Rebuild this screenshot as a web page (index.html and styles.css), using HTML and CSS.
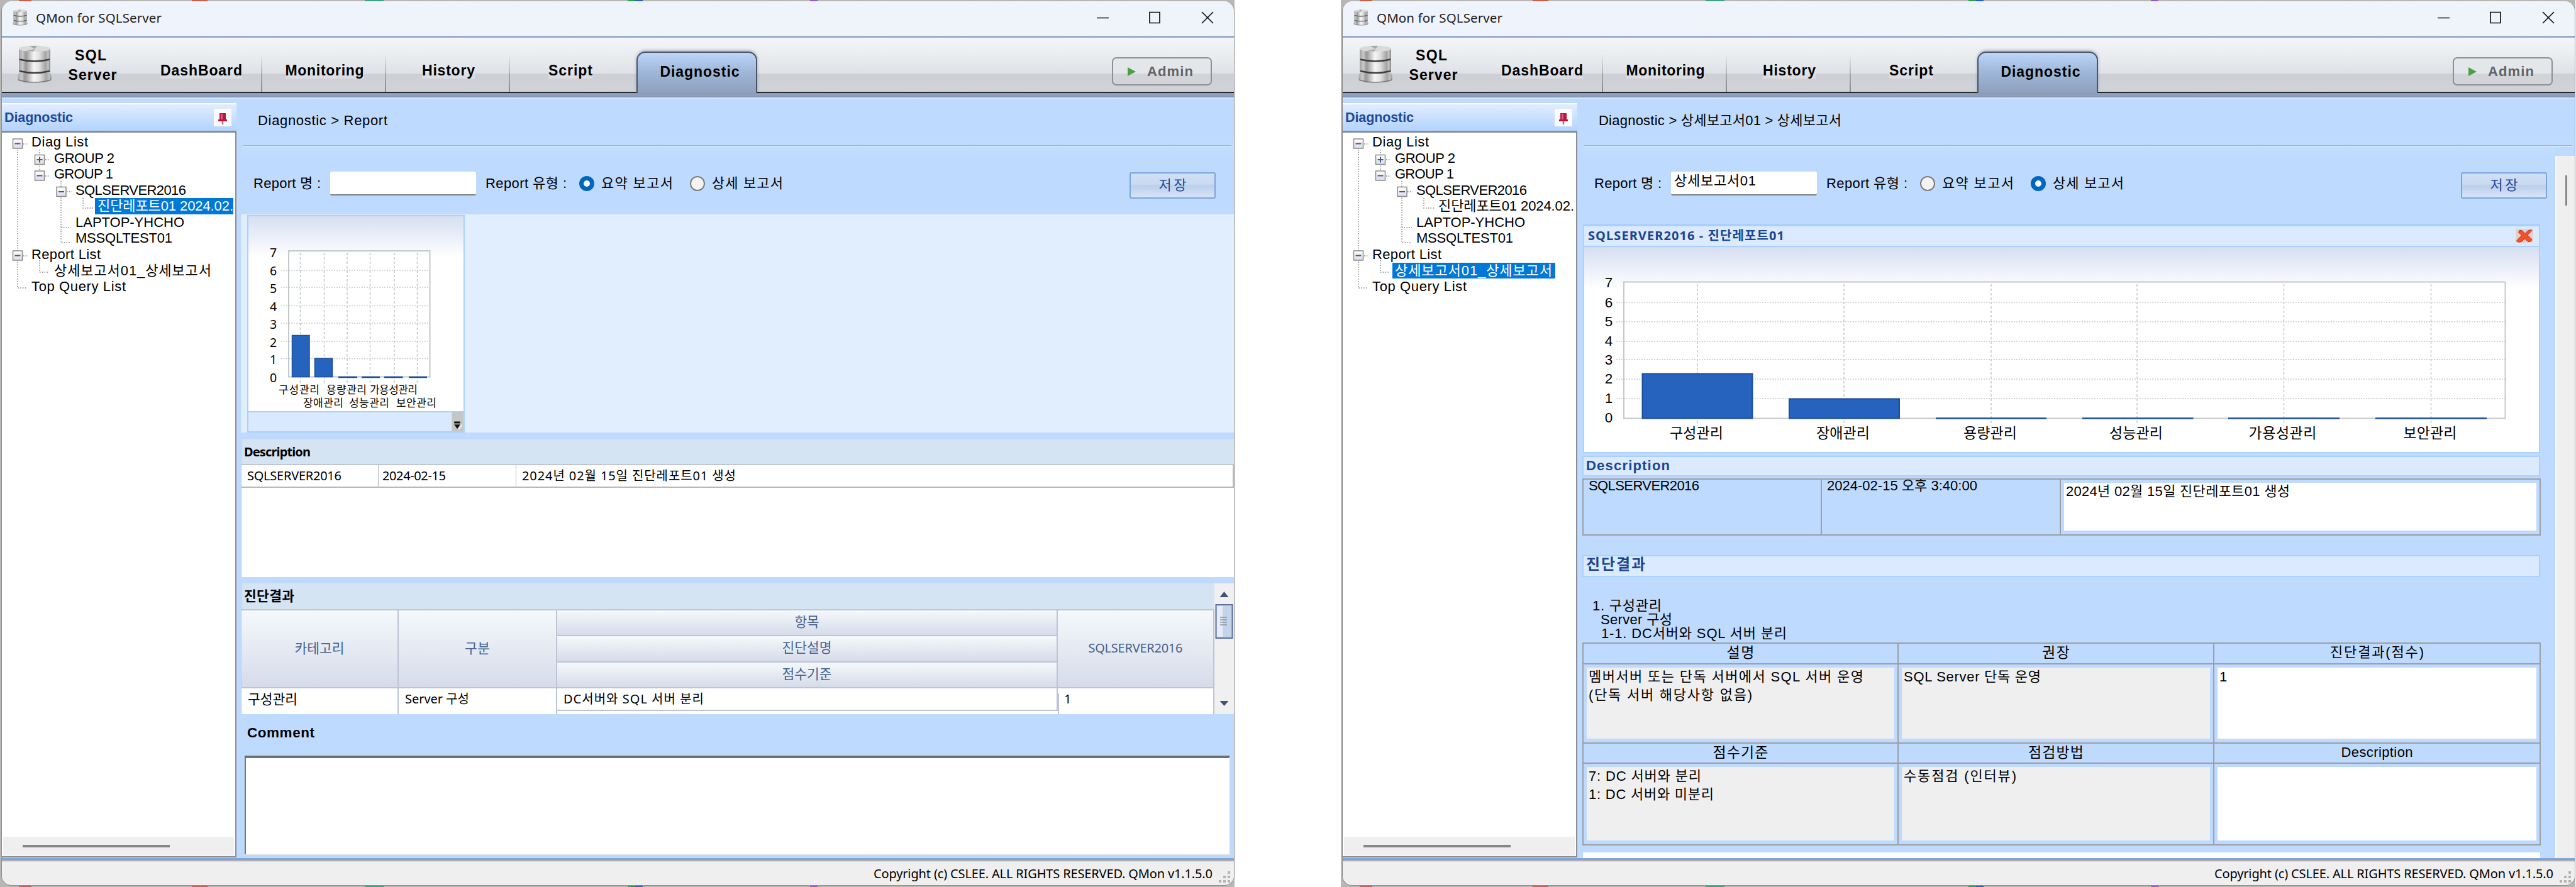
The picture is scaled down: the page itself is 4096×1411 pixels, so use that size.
FILE: index.html
```html
<!DOCTYPE html>
<html lang="ko">
<head>
<meta charset="utf-8">
<title>QMon for SQLServer</title>
<link rel="stylesheet" href="styles.css">
</head>
<body>
<svg class="defs" width="0" height="0">
  <defs>
    <linearGradient id="steel" x1="0" x2="1" y1="0" y2="0">
      <stop offset="0" stop-color="#a2a2a2"/><stop offset=".12" stop-color="#c9c9c9"/><stop offset=".22" stop-color="#979797"/>
      <stop offset=".48" stop-color="#f6f6f6"/><stop offset=".66" stop-color="#dedede"/><stop offset=".85" stop-color="#a4a4a4"/><stop offset=".93" stop-color="#c4c4c4"/><stop offset="1" stop-color="#858585"/>
    </linearGradient>
    <linearGradient id="sky" x1="0" x2="0" y1="0" y2="1">
      <stop offset="0" stop-color="#d6def1"/><stop offset="1" stop-color="#ffffff"/>
    </linearGradient>
    <linearGradient id="node" x1="0" x2="0" y1="0" y2="1">
      <stop offset="0" stop-color="#ffffff"/><stop offset="1" stop-color="#dcdcdc"/>
    </linearGradient>
  </defs>
  <symbol id="db" viewBox="0 0 56 61">
    <path d="M3 44h50l2 9q0 7-27 7t-27-7z" fill="url(#steel)"/>
    <path d="M3 22h50v19q0 5-25 5t-25-5z" fill="url(#steel)"/>
    <path d="M3 5h50v17q0 4-25 4t-25-4z" fill="url(#steel)"/>
    <ellipse cx="28" cy="5.500" rx="25" ry="5" fill="#dadada"/>
    <path d="M28 6L20 1h12zM28 6L12 9.500h14z" fill="#a8a8a8"/>
    <path d="M4 22.500q24 6 48 0M4 41q24 6 48 0" fill="none" stroke="#3d3d3d" stroke-width="2.500"/>
    <path d="M2 55q26 8 52 0" fill="none" stroke="#777" stroke-width="1.500"/>
  </symbol>
  <symbol id="tree-lines" viewBox="0 0 366 260">
    <g fill="none" stroke="#7d7d7d" stroke-width="1.500" stroke-dasharray="1.500 2.300">
      <path d="M23 25V245H38M32 16h8M32 194h8M58 25V67M67 41h8M67 67h8M58 201V220H73M92 75V173H108M92 149h16M101 92h8M127 102V118H144"/>
    </g>
    <g fill="url(#node)" stroke="#8a8a8a" stroke-width="1.500">
      <rect x="15.500" y="8" width="15" height="15"/><rect x="50.500" y="33.500" width="15" height="15"/><rect x="50.500" y="59" width="15" height="15"/>
      <rect x="85" y="84.500" width="15" height="15"/><rect x="15.500" y="186" width="15" height="15"/>
    </g>
    <path d="M18.500 15.500h9M53.500 41h9M58 36.500v9M53.500 66.500h9M88 92h9M18.500 193.500h9" stroke="#3a5aa8" stroke-width="2"/>
  </symbol>
  <symbol id="pin" viewBox="0 0 28 28">
    <rect width="28" height="28" fill="#fbfbfb"/>
    <path d="M9 7h10v10h2v3H7v-3h2z" fill="#b81541"/><path d="M11 8h3v9h-3z" fill="#e2557c"/><path d="M14 20v5" stroke="#b07088" stroke-width="2.500"/>
  </symbol>
  <symbol id="controls" viewBox="0 0 186 20">
    <path d="M0 10.500h19M84 1.500h16v17h-16zM167 1l18 18M185 1l-18 18" fill="none" stroke="#111" stroke-width="1.700"/>
  </symbol>
  <symbol id="grip" viewBox="0 0 22 20">
    <path d="M16 1h4v4h-4zM16 8h4v4h-4zM16 15h4v4h-4zM9 8h4v4H9zM9 15h4v4H9zM2 15h4v4H2z" fill="#b4b4b4"/>
  </symbol>
</svg>

<div class="desktop">
  <section class="window">
    <div class="frame">
      <header class="titlebar">
        <svg class="app-icon"><use href="#db"/></svg>
        <span class="app-name" data-w="200">QMon for SQLServer</span>
        <svg class="controls"><use href="#controls"/></svg>
      </header>
      <div class="title-rule"></div>
      <nav class="nav">
        <div class="brand"><svg class="brand-icon"><use href="#db"/></svg><div class="brand-name"><span data-w="50">SQL</span><span data-w="77">Server</span></div></div>
        <a class="tab"><span data-w="130">DashBoard</span></a>
        <a class="tab"><span data-w="125">Monitoring</span></a>
        <a class="tab"><span data-w="84">History</span></a>
        <a class="tab wide"><span data-w="70">Script</span></a>
        <a class="tab active"><span data-w="126">Diagnostic</span></a>
        <button class="admin"><i></i><span data-w="73">Admin</span></button>
      </nav>
      <div class="nav-rule"></div>
      <div class="body">
        <aside class="side">
          <div class="side-head"><span data-w="109">Diagnostic</span><svg class="pin"><use href="#pin"/></svg></div>
          <div class="tree">
            <svg class="tree-lines"><use href="#tree-lines"/></svg>
            <ul>
              <li class="l0"><span data-w="90">Diag List</span></li>
              <li class="l1"><span data-w="96">GROUP 2</span></li>
              <li class="l1"><span data-w="94">GROUP 1</span></li>
              <li class="l2"><span data-w="176">SQLSERVER2016</span></li>
              <li class="l3 selected"><span data-w="216">진단레포트01 2024.02.</span></li>
              <li class="l2"><span data-w="173">LAPTOP-YHCHO</span></li>
              <li class="l2"><span data-w="154">MSSQLTEST01</span></li>
              <li class="l0"><span data-w="110">Report List</span></li>
              <li class="l1"><span data-w="250">상세보고서01_상세보고서</span></li>
              <li class="l0"><span data-w="150">Top Query List</span></li>
            </ul>
            <div class="hscroll"><i></i></div>
          </div>
        </aside>
        <main class="main">
          <div class="crumbs"><span data-w="206">Diagnostic &gt; Report</span></div>
          <div class="rule"></div>
          <div class="filter">
            <span class="f-name" data-w="107">Report 명 :</span>
            <div class="input"></div>
            <span class="f-type" data-w="129">Report 유형 :</span>
            <i class="radio on"></i><span class="f-opt" data-w="114">요약 보고서</span>
            <i class="radio second"></i><span class="f-opt" data-w="113">상세 보고서</span>
            <button class="save"><span data-w="44">저장</span></button>
          </div>

          <div class="gallery">
            <div class="thumb">
              <svg class="thumb-chart" viewBox="395 344 342 310">
                <rect x="395" y="344" width="342" height="310" fill="#fff"/>
                <rect x="395" y="344" width="342" height="66" fill="url(#sky)"/>
                <g fill="none" stroke="#c4c8cc" stroke-width="1.500" stroke-dasharray="2 2">
                  <path d="M447 430H683M447 457H683M447 486.500H683M447 514H683M447 543H683M447 570.500H683"/>
                  <path stroke-dasharray="4 3" d="M477.500 402V611M515.500 402V611M552 402V611M588.500 402V611M627 402V611M663.500 402V611"/>
                </g>
                <rect x="459" y="399" width="224.500" height="200.500" fill="none" stroke="#c3c8ca" stroke-width="2"/>
                <g fill="#2563bf" stroke="#1c4f99" stroke-width="1.500">
                  <rect x="464.500" y="533.500" width="27.500" height="66"/><rect x="500.500" y="570" width="28" height="29.500"/>
                </g>
                <path d="M538 600h30M575 600h29M611 600h29.500M650 600h29" stroke="#1c4f99" stroke-width="2.500"/>
                <g class="axis-s" text-anchor="middle">
                  <text x="434.500" y="409">7</text><text x="434.500" y="438">6</text><text x="434.500" y="465.500">5</text><text x="434.500" y="495">4</text>
                  <text x="434.500" y="522.500">3</text><text x="434.500" y="551.500">2</text><text x="434.500" y="578.500">1</text><text x="434.500" y="608">0</text>
                </g>
                <g class="cat-s">
                  <text x="443" y="626" textLength="65">구성관리</text><text x="519" y="626" textLength="64">용량관리</text><text x="588" y="626" textLength="76">가용성관리</text>
                  <text x="482" y="646.500" textLength="64">장애관리</text><text x="555" y="646.500" textLength="64">성능관리</text><text x="630" y="646.500" textLength="64">보안관리</text>
                </g>
              </svg>
              <div class="thumb-foot"><svg viewBox="0 0 19 31"><rect width="19" height="31" fill="#c6c6c6"/><path d="M4 15h10v3H4zM4 20h10l-5 7z" fill="#111"/><path d="M15 20l1 2-5 6" fill="none" stroke="#fff" stroke-width="1.500"/></svg></div>
            </div>
          </div>

          <div class="sheet desc-sheet">
            <div class="sheet-head"><span data-w="106">Description</span></div>
            <div class="desc-row">
              <div><span data-w="150">SQLSERVER2016</span></div>
              <div><span data-w="101">2024-02-15</span></div>
              <div><span data-w="340">2024년 02월 15일 진단레포트01 생성</span></div>
            </div>
          </div>

          <div class="result">
            <div class="sheet result-sheet">
              <div class="sheet-head tall"><span class="hangul" data-w="80">진단결과</span></div>
              <div class="cols">
                <div class="th full c1"><span class="hangul" data-w="79">카테고리</span></div>
                <div class="th full c2"><span class="hangul" data-w="40">구분</span></div>
                <div class="th"><span class="hangul" data-w="39">항목</span></div>
                <div class="th"><span class="hangul" data-w="79">진단설명</span></div>
                <div class="th"><span class="hangul" data-w="79">점수기준</span></div>
                <div class="th full c4"><span data-w="150">SQLSERVER2016</span></div>
              </div>
              <div class="cells">
                <div><span class="hangul" data-w="79">구성관리</span></div>
                <div><span data-w="102">Server 구성</span></div>
                <div class="item"><span data-w="223">DC서버와 SQL 서버 분리</span></div>
                <div><span>1</span></div>
              </div>
            </div>
            <div class="vscroll">
              <svg viewBox="0 0 31 208"><rect width="31" height="208" fill="#f0f0f1"/><path d="M8.500 22h14l-7-9z" fill="#3f5278"/><path d="M8.500 187h14l-7 8z" fill="#3f5278"/>
              <rect x="2.500" y="34" width="26" height="53" fill="#c6d4ea" stroke="#5b6f9b" stroke-width="2"/><rect x="4" y="36" width="9" height="49" fill="#e6edf8"/>
              <path d="M9 54h11M9 58h11M9 62h11M9 66h11" stroke="#8b95a3" stroke-width="1.500"/></svg>
            </div>
          </div>

          <div class="comment-label"><span data-w="107">Comment</span></div>
          <div class="comment-box"></div>
        </main>
      </div>
      <div class="foot-rule"></div>
      <footer class="status"><span data-w="539">Copyright (c) CSLEE. ALL RIGHTS RESERVED. QMon v1.1.5.0</span><svg class="grip"><use href="#grip"/></svg></footer>
    </div>
  </section>

  <section class="window">
    <div class="frame">
      <header class="titlebar">
        <svg class="app-icon"><use href="#db"/></svg>
        <span class="app-name" data-w="200">QMon for SQLServer</span>
        <svg class="controls"><use href="#controls"/></svg>
      </header>
      <div class="title-rule"></div>
      <nav class="nav">
        <div class="brand"><svg class="brand-icon"><use href="#db"/></svg><div class="brand-name"><span data-w="50">SQL</span><span data-w="77">Server</span></div></div>
        <a class="tab"><span data-w="130">DashBoard</span></a>
        <a class="tab"><span data-w="125">Monitoring</span></a>
        <a class="tab"><span data-w="84">History</span></a>
        <a class="tab wide"><span data-w="70">Script</span></a>
        <a class="tab active"><span data-w="126">Diagnostic</span></a>
        <button class="admin"><i></i><span data-w="73">Admin</span></button>
      </nav>
      <div class="nav-rule"></div>
      <div class="body">
        <aside class="side">
          <div class="side-head"><span data-w="109">Diagnostic</span><svg class="pin"><use href="#pin"/></svg></div>
          <div class="tree">
            <svg class="tree-lines"><use href="#tree-lines"/></svg>
            <ul>
              <li class="l0"><span data-w="90">Diag List</span></li>
              <li class="l1"><span data-w="96">GROUP 2</span></li>
              <li class="l1"><span data-w="94">GROUP 1</span></li>
              <li class="l2"><span data-w="176">SQLSERVER2016</span></li>
              <li class="l3"><span data-w="216">진단레포트01 2024.02.</span></li>
              <li class="l2"><span data-w="173">LAPTOP-YHCHO</span></li>
              <li class="l2"><span data-w="154">MSSQLTEST01</span></li>
              <li class="l0"><span data-w="110">Report List</span></li>
              <li class="l1 selected"><span data-w="250">상세보고서01_상세보고서</span></li>
              <li class="l0"><span data-w="150">Top Query List</span></li>
            </ul>
            <div class="hscroll"><i></i></div>
          </div>
        </aside>
        <main class="main">
          <div class="crumbs"><span data-w="386">Diagnostic &gt; 상세보고서01 &gt; 상세보고서</span></div>
          <div class="rule"></div>
          <div class="detail">
            <div class="report">
              <div class="filter">
                <span class="f-name" data-w="107">Report 명 :</span>
                <div class="input"><span data-w="130">상세보고서01</span></div>
                <span class="f-type" data-w="129">Report 유형 :</span>
                <i class="radio"></i><span class="f-opt" data-w="114">요약 보고서</span>
                <i class="radio on second"></i><span class="f-opt" data-w="113">상세 보고서</span>
                <button class="save near"><span data-w="44">저장</span></button>
              </div>

              <div class="card">
                <div class="card-head"><span data-w="312">SQLSERVER2016 - 진단레포트01</span>
                  <svg class="remove" viewBox="0 0 28 22"><rect width="28" height="22" fill="#dcd2cf"/><path d="M6 2.500l4 0 5 5 4-4q5-3 7-1l-7 7.500 7 7q-1 4-6 3.500l-5.500-5-5 5q-6 2-8-1.500l8-8.500-5-5z" fill="#f4502a" stroke="#c03a1a"/></svg>
                </div>
                <svg class="big-chart" viewBox="387 393 1518 326">
                  <rect x="387" y="393" width="1518" height="326" fill="#fff"/>
                  <rect x="387" y="393" width="1518" height="66" fill="url(#sky)"/>
                  <rect x="450" y="448.500" width="1401.500" height="217" fill="#fff" fill-opacity=".6"/>
                  <g fill="none" stroke="#c4c8cc" stroke-width="1.500" stroke-dasharray="2 2">
                    <path d="M438 481H1851M438 512H1851M438 543H1851M438 572H1851M438 603H1851M438 634H1851"/>
                    <path stroke-dasharray="4 3" d="M567 452V677M800 452V677M1034 452V677M1266 452V677M1499.500 452V677M1733.500 452V677"/>
                  </g>
                  <rect x="450" y="448.500" width="1401.500" height="217" fill="none" stroke="#c3c8ca" stroke-width="2"/>
                  <g fill="#2563bf" stroke="#1c4f99" stroke-width="2">
                    <rect x="479.500" y="594.500" width="175" height="71"/><rect x="713" y="634.500" width="175" height="31"/>
                  </g>
                  <path d="M946 665.500h176M1179 665.500h176.500M1411 665.500h177M1645 665.500h177" stroke="#1c4f99" stroke-width="2.500"/>
                  <g class="axis" text-anchor="middle">
                    <text x="426" y="457">7</text><text x="426" y="488.500">6</text><text x="426" y="519">5</text><text x="426" y="550">4</text>
                    <text x="426" y="579.500">3</text><text x="426" y="610">2</text><text x="426" y="641">1</text><text x="426" y="672">0</text>
                  </g>
                  <g class="cat">
                    <text x="523" y="697" textLength="85">구성관리</text><text x="756" y="697" textLength="85">장애관리</text><text x="990" y="697" textLength="85">용량관리</text>
                    <text x="1222" y="697" textLength="85">성능관리</text><text x="1443.500" y="697" textLength="108">가용성관리</text><text x="1689.500" y="697" textLength="85">보안관리</text>
                  </g>
                </svg>
              </div>

              <div class="bar first"><span data-w="133">Description</span></div>
              <div class="grid summary">
                <div><span data-w="176">SQLSERVER2016</span></div>
                <div><span data-w="239">2024-02-15 오후 3:40:00</span></div>
                <div class="holder"><div class="field"><span data-w="356">2024년 02월 15일 진단레포트01 생성</span></div></div>
              </div>

              <div class="bar next"><span class="hangul" data-w="94">진단결과</span></div>
              <div class="outline">
                <div class="o1"><span data-w="110">1. 구성관리</span></div>
                <div class="o2"><span data-w="114">Server 구성</span></div>
                <div class="o3"><span data-w="295">1-1. DC서버와 SQL 서버 분리</span></div>
              </div>
              <div class="grid matrix">
                <div class="head"><span class="hangul" data-w="44">설명</span></div><div class="head"><span class="hangul" data-w="44">권장</span></div><div class="head"><span data-w="149">진단결과(점수)</span></div>
                <div class="holder"><div class="field locked"><span data-w="437">멤버서버 또는 단독 서버에서 SQL 서버 운영</span><span data-w="260">(단독 서버 해당사항 없음)</span></div></div>
                <div class="holder"><div class="field locked"><span data-w="218">SQL Server 단독 운영</span></div></div>
                <div class="holder"><div class="field"><span>1</span></div></div>
                <div class="head"><span class="hangul" data-w="88">점수기준</span></div><div class="head"><span class="hangul" data-w="88">점검방법</span></div><div class="head"><span data-w="114">Description</span></div>
                <div class="holder"><div class="field locked"><span data-w="179">7: DC 서버와 분리</span><span data-w="199">1: DC 서버와 미분리</span></div></div>
                <div class="holder"><div class="field locked"><span data-w="179">수동점검 (인터뷰)</span></div></div>
                <div class="holder"><div class="field"></div></div>
              </div>
              <div class="tail"></div>
            </div>
            <div class="page-scroll"><i></i></div>
          </div>
        </main>
      </div>
      <div class="foot-rule"></div>
      <footer class="status"><span data-w="539">Copyright (c) CSLEE. ALL RIGHTS RESERVED. QMon v1.1.5.0</span><svg class="grip"><use href="#grip"/></svg></footer>
    </div>
  </section>
</div>
<script src="labels.js"></script>
</body>
</html>
```
FILE: labels.js
```js
// Tracks every label out (or in) to the width, in pixels, given by its data-w.
document.querySelectorAll('[data-w]').forEach(function (label) {
  var width = parseFloat(label.dataset.w);
  var gaps = label.textContent.length - 1;
  var range = document.createRange();
  range.selectNodeContents(label);
  var natural = range.getBoundingClientRect().width;
  label.style.letterSpacing = ((width - natural) / gaps).toFixed(3) + 'px';
  label.style.width = width + 'px';
});
```
FILE: styles.css
```css
* { box-sizing: border-box; }
body { margin: 0; background: #fff; color: #000; font: 22px/26px "Liberation Sans", "Noto Sans CJK KR", sans-serif; }
ul { list-style: none; margin: 0; padding: 0; }
button { font: inherit; padding: 0; }
svg { display: block; flex: none; }
.defs { position: absolute; }
span { display: inline-block; white-space: nowrap; flex: none; box-sizing: content-box; }

.desktop { width: 4096px; height: 1411px; display: flex; gap: 169px; overflow: hidden; }
.window {
  width: 1963px; height: 1411px; flex: none; padding: 2px 0 2px 2px;
  background: linear-gradient(90deg, #b9b7b4 0 30px, #c65f48 30px 50px, #b9b7b4 50px 305px, #c65f48 305px 330px, #b9b7b4 330px 580px, #3fa082 580px 610px, #b9b7b4 610px 998px, #2f9d5a 998px 1010px, #2d5fc0 1010px 1022px, #b9b7b4 1022px 1288px, #8f5fc4 1288px 1300px, #b9b7b4 1300px);
}
.frame { height: 1407px; border: 1px solid #8f8f8f; border-top: 0; border-radius: 16px; overflow: hidden; display: flex; flex-direction: column; background: #bfdaff; }

/* title bar */
.titlebar { height: 55px; display: flex; align-items: center; padding: 0 32px 3px 17px; background: linear-gradient(90deg, #eff3fc, #eef4f9); }
.app-icon { width: 24px; height: 26px; margin-right: 13px; }
.app-name { font: 20.500px/26px "Noto Sans", sans-serif; color: #1b1b1b; }
.controls { width: 186px; height: 20px; margin-left: auto; }
.title-rule { height: 3px; background: linear-gradient(#a0a0a0 50%, #8fb3ec 50%); }

/* navigation */
.nav { height: 86px; display: flex; background: linear-gradient(#f4f5f8, #e6e9ec 45%, #dee1e6 66%, #cecfd5 67%, #d0d3d6); font-weight: bold; font-size: 23px; }
.brand { width: 221px; display: flex; padding: 12px 0 0 24px; }
.brand-icon { width: 56px; height: 61px; }
.brand-name { width: 128px; display: flex; flex-direction: column; align-items: center; line-height: 31px; padding-top: 1px; }
.brand-name span:first-child { margin-right: 6px; }
.tab { width: 197px; display: flex; justify-content: center; padding: 39px 0 0 3px; border-right: 2px solid; border-image: linear-gradient(transparent 30%, #85888d) 1; }
.brand + .tab { width: 193px; padding-left: 1px; }
.tab.wide { width: 201px; border: 0; padding-right: 12px; }
.tab span { background: rgba(228, 231, 235, .55); height: 26px; }
.tab.active {
  width: 192px; height: 66px; margin-top: 22px; margin-bottom: -2px; padding: 17px 0 0 9px; position: relative;
  border: 2px solid #4b5568; border-bottom: 0; border-radius: 14px 14px 0 0; background: linear-gradient(#bdd5f8, #a0b8da 45%, #8ea0bc); box-shadow: 0 -2px 4px rgba(80, 90, 110, .4);
}
.tab.active span { background: none; }
.admin { width: 159px; height: 45px; margin: 31px 35px 0 auto; display: flex; align-items: center; border: 2px solid #8c8f93; border-radius: 7px; background: linear-gradient(#e4e7ea 58%, #d2d4d8 60%); color: #606266; font-weight: bold; font-size: 22px; }
.admin i { margin: 0 18px 0 23px; border-left: 13px solid #4ba043; border-top: 7px solid transparent; border-bottom: 7px solid transparent; }
.nav-rule { height: 11px; flex: none; background: linear-gradient(#23272e 0 2px, #8ea0bc 2px 7px, #7487a3 9px, #d5e7ff 9px 11px); }

/* side panel */
.body { height: 1208px; display: flex; }
.side { width: 373px; padding-top: 7px; flex: none; }
.side-head { height: 44px; display: flex; align-items: center; justify-content: space-between; padding: 0 8px 0 4px; border-top: 2px solid #fff; background: linear-gradient(#e1edff, #b3d3ff); font-weight: bold; font-size: 21.500px; color: #1c4b9c; }
.pin { width: 28px; height: 28px; }
.tree { height: 1156px; display: grid; grid-template-rows: 1118px 30px; align-content: space-between; background: #fff; border: 2px solid #8a8d92; border-left: 0; border-top-width: 3px; padding: 2px 2px 1px; }
.tree > ul, .tree-lines { grid-area: 1 / 1; }
.tree-lines { width: 366px; height: 260px; }
.tree li { height: 25.570px; line-height: 25.570px; display: flex; }
.l0 { padding-left: 41px; } .l1 { padding-left: 77px; } .l2 { padding-left: 111px; } .l3 { padding-left: 146px; }
.tree li span { padding-left: 4px; height: 25.570px; }
.tree .selected span { background: #0078d7; color: #fff; padding-right: 5px; }
.tree .l3.selected span { padding-right: 0; }
.hscroll { background: #efefef; padding: 13px 0 0 31px; }
.hscroll i { display: block; width: 234px; height: 4px; background: #868686; }

/* report heading and options */
.main { width: 1579px; margin-left: auto; display: flex; flex-direction: column; }
.crumbs { height: 74px; padding: 22px 0 0 27px; background: linear-gradient(transparent 75%, #bddcff); }
.rule { height: 3px; margin: 0 4px; background: linear-gradient(#98b4d6 50%, #d3e8ff 50%); flex: none; }
.filter { height: 107px; flex: none; display: flex; align-items: center; padding: 8px 0 0 20px; background: linear-gradient(#c0dfff, #bfdaff 16%); }
.input { width: 232px; height: 38px; margin-left: 15px; padding: 2px 0 0 5px; background: #fff; border-bottom: 2px solid #7f7f7f; border-radius: 3px; }
.f-type { margin-left: 15px; }
.radio { width: 24px; height: 24px; margin-left: 20px; border-radius: 50%; border: 2px solid #7d7d7d; background: #f3f3f3; }
.radio.second { margin-left: 27px; }
.radio.on { border: 7px solid #0067c0; background: #fff; }
.f-opt { margin-left: 11px; }
.save { width: 137px; height: 42px; margin: 7px 29px 0 auto; border: 2px solid #7da4da; border-radius: 3px; background: linear-gradient(#cfe0f5, #c9daf1 45%, #bbcfeb 50%, #d6e4f8); color: #1b4b9b; line-height: 36px; }
.save.near { margin-right: 13px; }

/* summary report */
.gallery { height: 347px; flex: none; padding: 1px 0 0 10px; background: #e1eefe; }
.thumb { width: 346px; height: 346px; border: 2px solid #abd0ff; background: #fff; }
.thumb-chart { width: 342px; height: 310px; }
.axis-s { font: 19.500px "Noto Sans", sans-serif; }
.cat-s { font: 17px "Noto Sans CJK KR", sans-serif; }
.thumb-foot { height: 32px; border-top: 2px solid #abd0ff; background: #d9e9ff; display: flex; justify-content: flex-end; }
.thumb-foot svg { width: 19px; height: 30px; }
.sheet { background: #fff; border-left: 1px solid #c3c8d6; font: 20px/26px "Noto Sans", "Noto Sans CJK KR", sans-serif; }
.sheet .hangul { font-size: 21.500px; }
.desc-sheet { margin-top: 11px; height: 219px; flex: none; }
.sheet-head { height: 41px; padding: 7px 0 0 4px; background: #d5e4f3; border-bottom: 2px solid #bfc6d4; font-weight: bold; }
.sheet-head.tall { height: 43px; }
.desc-row { height: 36px; display: grid; grid-template-columns: 218px 219px 1fr; border-bottom: 2px solid #b9b9b9; border-right: 2px solid #b9b9b9; }
.desc-row div { padding: 4px 0 0 9px; border-right: 1.500px solid #b5b8c2; }
.desc-row div + div { padding-left: 6px; }
.desc-row div:last-child { padding-left: 9px; border: 0; }
.result { height: 208px; flex: none; margin-top: 10px; display: flex; overflow: hidden; }
.result-sheet { width: 1548px; }
.cols { height: 124px; display: grid; grid-template: repeat(3, 1fr) / 250px 252px 1fr 249px; color: #45628f; }
.th { grid-column: 3; display: flex; align-items: center; justify-content: center; padding-bottom: 3px; border: solid #bcc4d6; border-width: 0 2px 2px 0; background: linear-gradient(#f5f9fc, #d5dbe9); }
.th.full { grid-row: 1 / 4; padding-bottom: 2px; }
.c1 { grid-column: 1; } .c2 { grid-column: 2; } .c4 { grid-column: 4; }
.cells { height: 41px; display: grid; grid-template-columns: 250px 252px 1fr 249px; }
.cells div { padding: 4px 0 0 10px; border-right: 2px solid #bcc4d6; }
.cells .item { height: 36px; border-bottom: 2px solid #bcc4d6; box-shadow: 0 8px #fff, 2px 8px #bcc4d6; }
.vscroll svg { width: 31px; height: 208px; }
.comment-label { height: 66px; flex: none; padding: 17px 0 0 10px; font-weight: bold; font-size: 22.500px; }
.comment-box { height: 158px; flex: none; margin: 0 6px; background: #fff; border: 2px solid #e8e8e8; border-top: 4px solid #6f6f6f; border-left: 2px solid #777; }

/* detailed report */
.detail { height: 1131px; display: flex; }
.report { width: 1548px; padding-right: 24px; }
.report .filter { width: 1548px; }
.card { margin: 15px 0 0 2px; width: 1522px; height: 365px; border: 2px solid #abd0ff; border-top-width: 4px; }
.card-head { height: 33px; display: flex; align-items: center; justify-content: space-between; padding: 0 9px 2px 6px; background: #dbeaff; border-bottom: 2px solid #abd0ff; font: bold 20px/26px "Noto Sans", "Noto Sans CJK KR", sans-serif; color: #1a4691; }
.remove { width: 28px; height: 22px; }
.big-chart { width: 1518px; height: 326px; }
.axis { font: 22.500px "Liberation Sans", sans-serif; }
.cat { font: 23px "Noto Sans CJK KR", sans-serif; }
.bar { width: 1523px; margin-left: 1px; background: #dbeaff; border: 2px solid #abd0ff; color: #1a4691; font-weight: bold; font-size: 22px; padding-left: 4px; }
.bar.first { height: 33px; margin-top: 4px; padding-top: 1px; }
.bar.next { height: 35px; margin-top: 31px; }
.bar .hangul { font-size: 24px; }
.grid { width: 1524px; margin-left: 1px; display: grid; gap: 2px; padding: 2px; background: #9d9fa3; line-height: 29px; }
.grid > div { background: #bfdaff; }
.summary { margin-top: 3px; height: 91px; grid-template-columns: 377px 378px 1fr; }
.summary > div:not(.holder) { padding-left: 8px; line-height: 20px; }
.matrix { margin-top: 3px; height: 323px; grid-template: 31px 124px 30px 128px / 499px 500px 1fr; }
.head { text-align: center; line-height: 28px; }
.head .hangul { font-size: 23px; }
.grid .holder { display: flex; padding: 5px 5px 6px 5px; }
.field { flex: 1; background: #fff; padding-left: 3px; display: flex; flex-direction: column; align-items: flex-start; }
.summary .field { line-height: 28px; }
.field.locked { background: #efefef; }
.outline { height: 101px; padding-top: 35px; line-height: 22px; }
.o1 { padding-left: 17px; } .o2 { padding-left: 30px; } .o3 { padding-left: 31px; }
.outline span { display: block; }
.tail { height: 9px; margin: 11px 0 0 2px; background: #fff; }
.page-scroll { width: 31px; margin-top: 14px; background: #efefef; border-left: 2px solid #fafafa; padding: 31px 0 0 14px; }
.page-scroll i { display: block; width: 3px; height: 48px; background: #868686; }

/* status bar */
.foot-rule { height: 4px; flex: none; background: linear-gradient(#7fa8e0 50%, #9c9c9c 50%); }
.status { flex: 1; display: flex; align-items: center; justify-content: flex-end; padding-right: 4px; background: #efefef; border-top: 2px solid #dadada; font: 20px/26px "Noto Sans", sans-serif; }
.grip { width: 22px; height: 20px; margin: 10px 0 0 8px; }
```
